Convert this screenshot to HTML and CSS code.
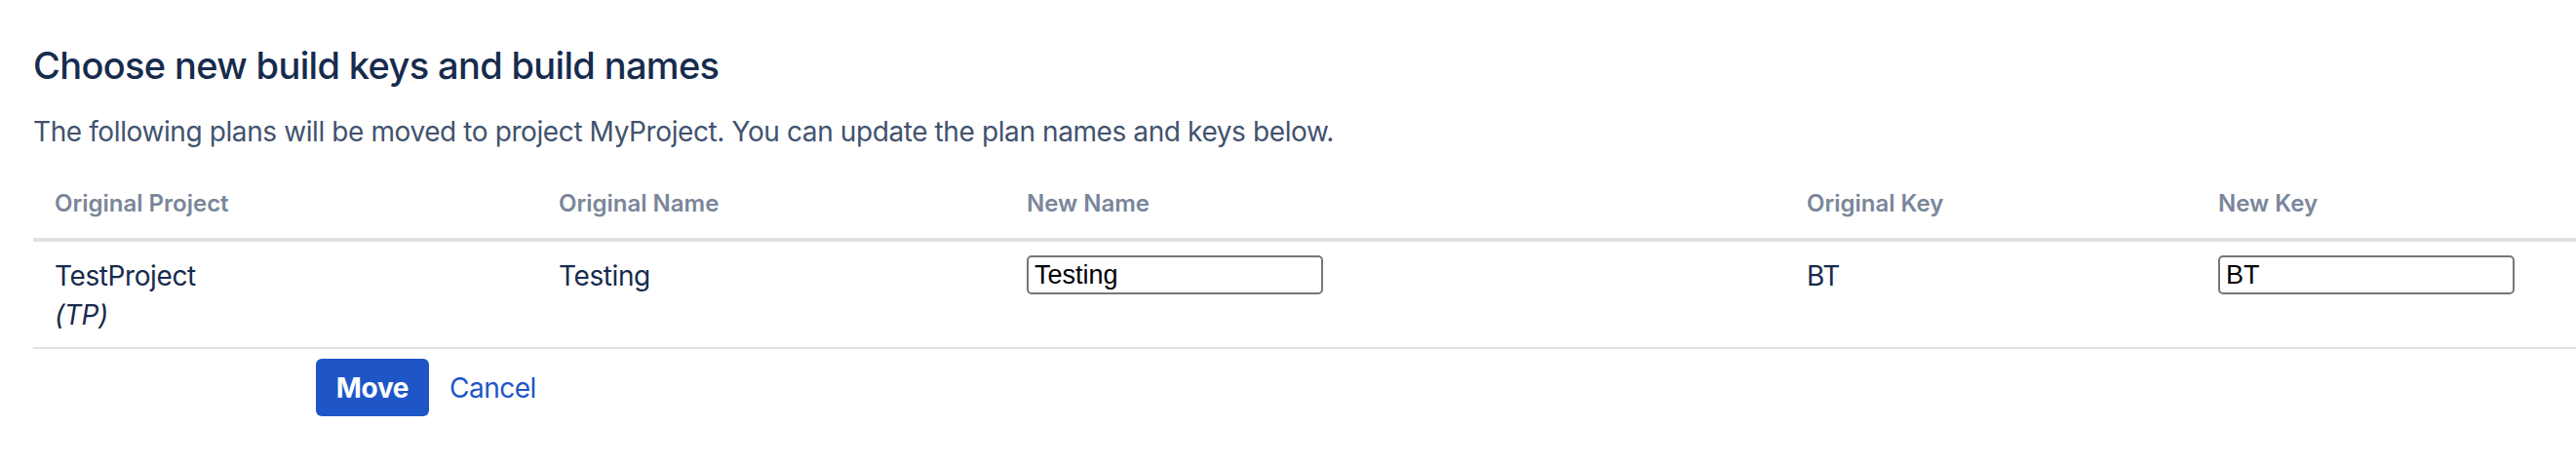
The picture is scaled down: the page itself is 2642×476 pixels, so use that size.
FILE: index.html
```html
<!DOCTYPE html>
<html lang="en">
<head>
<meta charset="utf-8">
<title>Move plans</title>
<link rel="stylesheet" href="styles.css">
</head>
<body>
<main class="page">
  <h2 class="title">Choose new build keys and build names</h2>
  <p class="intro">The following plans will be moved to project MyProject. You can update the plan names and keys below.</p>
  <table class="plans">
    <colgroup>
      <col class="c1"><col class="c2"><col class="c3"><col class="c4"><col class="c5">
    </colgroup>
    <thead>
      <tr>
        <th>Original Project</th>
        <th>Original Name</th>
        <th>New Name</th>
        <th>Original Key</th>
        <th>New Key</th>
      </tr>
    </thead>
    <tbody>
      <tr>
        <td>TestProject<br><em>(TP)</em></td>
        <td>Testing</td>
        <td><input class="field" type="text" value="Testing"></td>
        <td>BT</td>
        <td><input class="field" type="text" value="BT"></td>
      </tr>
    </tbody>
  </table>
  <div class="actions">
    <button class="btn-primary" type="button">Move</button>
    <a class="link" href="#">Cancel</a>
  </div>
</main>
</body>
</html>
```

FILE: styles.css
```css
html, body {
  margin: 0;
  padding: 0;
  background: #ffffff;
}

body {
  font-family: Inter, "Liberation Sans", sans-serif;
  color: #172B4D;
  overflow: hidden;
}

.page {
  padding: 43px 0 0 34px;
}

.title {
  margin: 0;
  font-size: 38px;
  line-height: 48px;
  font-weight: 500;
  color: #172B4D;
  letter-spacing: -0.65px;
}

.intro {
  margin: 24px 0 0 0;
  font-size: 28px;
  line-height: 40px;
  color: #42526E;
  letter-spacing: -0.4px;
}

.plans {
  margin-top: 23px;
  border-collapse: collapse;
  table-layout: fixed;
  width: 2640px;
}

.c1 { width: 517px; }
.c2 { width: 480px; }
.c3 { width: 800px; }
.c4 { width: 422px; }
.c5 { width: 421px; }

.plans th {
  text-align: left;
  font-size: 24px;
  line-height: 32px;
  font-weight: 600;
  color: #7A869A;
  padding: 15px 20px 19px 22px;
  border-bottom: 4px solid #DFE1E6;
}

.plans td {
  vertical-align: top;
  font-size: 28px;
  line-height: 40px;
  color: #172B4D;
  letter-spacing: -0.4px;
  padding: 15px 20px 13px 22px;
  border-bottom: 2px solid #DFE1E6;
}

.plans em {
  font-style: italic;
}

.field {
  box-sizing: border-box;
  width: 304px;
  height: 40px;
  margin: -1px 0 0 0;
  padding: 0 6px;
  border: 2px solid #767676;
  border-radius: 5px;
  font-family: "Liberation Sans", Arial, sans-serif;
  font-size: 27px;
  letter-spacing: 0;
  color: #000000;
  background: #ffffff;
  display: block;
}

.actions {
  display: flex;
  align-items: center;
  gap: 21px;
  margin: 10px 0 0 290px;
}

.btn-primary {
  width: 116px;
  height: 59px;
  border: none;
  border-radius: 6px;
  background: #1E56C7;
  color: #ffffff;
  font-family: Inter, "Liberation Sans", sans-serif;
  font-size: 28px;
  font-weight: 700;
  letter-spacing: -0.3px;
  padding: 0;
}

.link {
  color: #1E56C7;
  font-size: 28px;
  letter-spacing: -0.5px;
  text-decoration: none;
}
```
